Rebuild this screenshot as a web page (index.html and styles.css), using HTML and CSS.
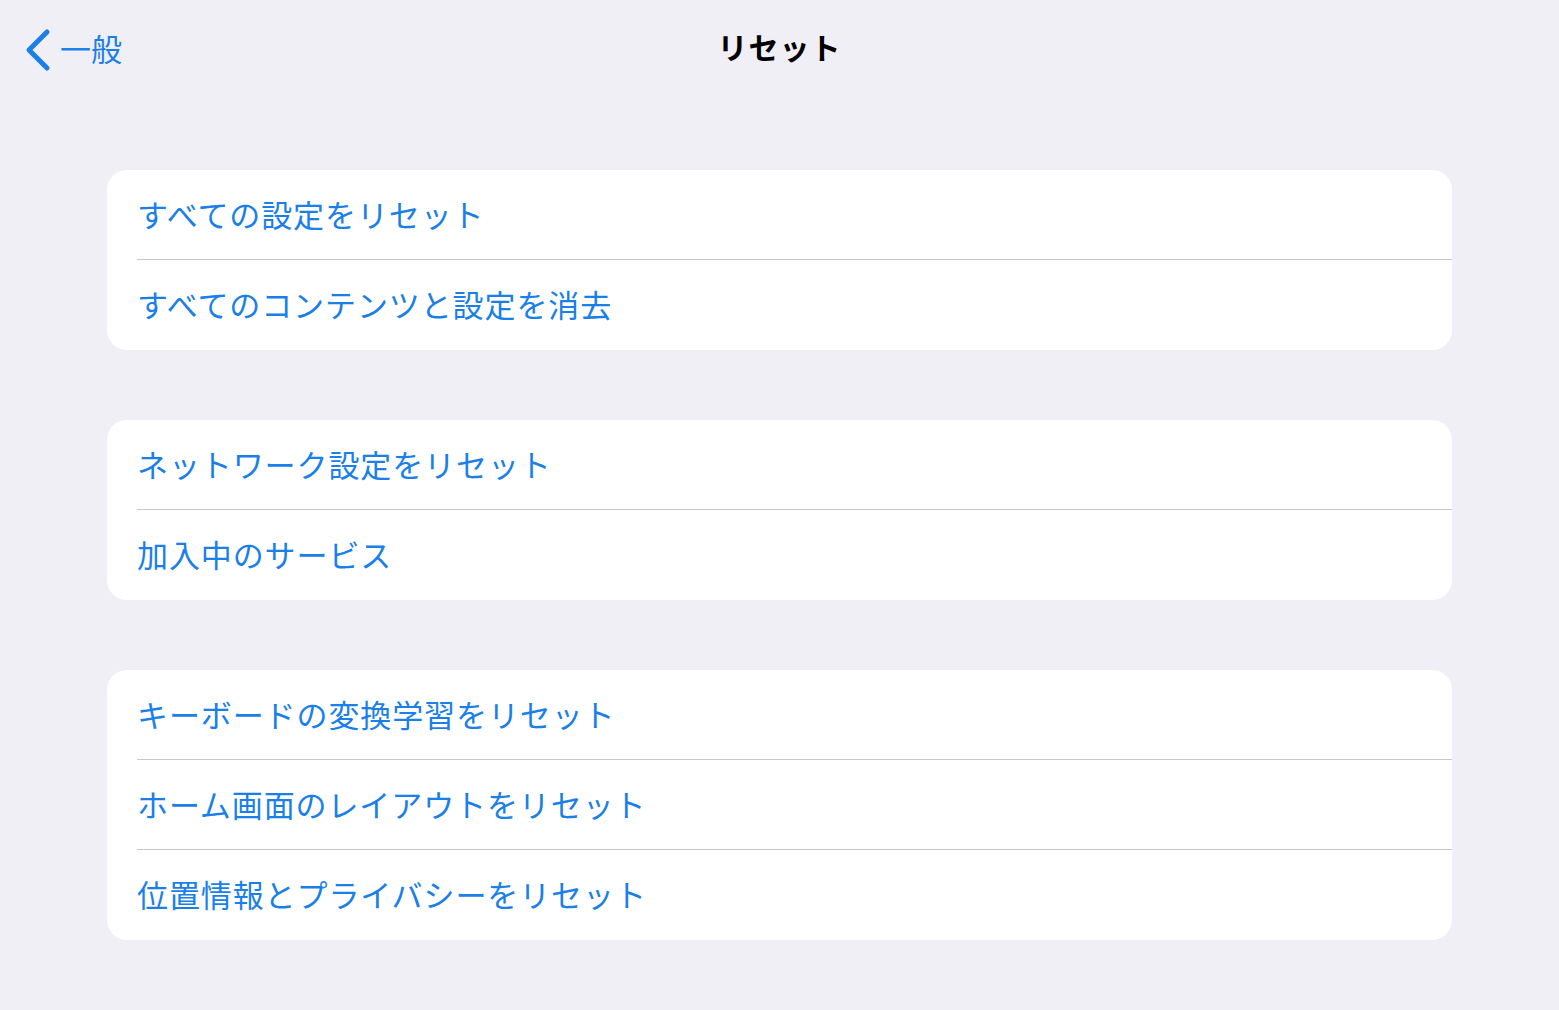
FILE: index.html
```html
<!DOCTYPE html>
<html lang="ja">
<head>
<meta charset="utf-8">
<title>リセット</title>
<link rel="stylesheet" href="styles.css">
</head>
<body>
<header class="nav">
  <div class="back">
    <svg class="chev" width="32" height="48" viewBox="0 0 32 48"><path d="M23 6 L5 24 L23 42" fill="none" stroke="#1a7fe8" stroke-width="5" stroke-linecap="round" stroke-linejoin="round"/></svg>
    <span class="back-label">一般</span>
  </div>
  <h1 class="title">リセット</h1>
</header>
<main class="content">
  <section class="group">
    <div class="row">すべての設定をリセット</div>
    <div class="row">すべてのコンテンツと設定を消去</div>
  </section>
  <section class="group">
    <div class="row">ネットワーク設定をリセット</div>
    <div class="row">加入中のサービス</div>
  </section>
  <section class="group">
    <div class="row">キーボードの変換学習をリセット</div>
    <div class="row">ホーム画面のレイアウトをリセット</div>
    <div class="row">位置情報とプライバシーをリセット</div>
  </section>
</main>
</body>
</html>
```

FILE: styles.css
```css
html, body {
  margin: 0;
  padding: 0;
  background: #f1eff6;
  font-family: "Noto Sans CJK JP", "Noto Sans", sans-serif;
}
.nav {
  position: relative;
  height: 100px;
}
.back {
  position: absolute;
  left: 24px;
  top: 25px;
  display: flex;
  align-items: center;
  gap: 4px;
  color: #1a7fe8;
}
.chev { display: block; }
.back-label {
  font-size: 31px;
  line-height: 46px;
  padding-bottom: 4px;
}
.title {
  margin: 0;
  text-align: center;
  font-size: 30px;
  font-weight: 700;
  letter-spacing: 1px;
  color: #000;
  line-height: 46px;
  padding-top: 23px;
}
.content {
  padding: 70px 107px 0 107px;
  display: flex;
  flex-direction: column;
  gap: 70px;
}
.group {
  background: #fff;
  border-radius: 20px;
  overflow: hidden;
}
.row {
  height: 90px;
  box-sizing: border-box;
  margin-left: 30px;
  padding-bottom: 3px;
  display: flex;
  align-items: center;
  font-size: 31px;
  color: #1a7fe8;
  letter-spacing: 0.9px;
}
.row:not(:last-child) {
  border-bottom: 1px solid #c8c7cc;
}
```
